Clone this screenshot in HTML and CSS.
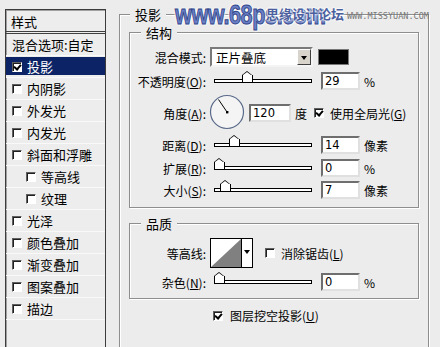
FILE: index.html
```html
<!DOCTYPE html>
<html lang="zh">
<head>
  <meta charset="UTF-8" />
  <title>图层样式 - 投影</title>
  <link rel="stylesheet" href="styles.css">
</head>
<body>
  <div class="dialog">
    <div class="styles-list">
      <div class="list-head">样式</div>
      <div class="item">混合选项:自定</div>
      <div class="item selected"><span class="cb checked"></span>投影</div>
      <div class="item"><span class="cb"></span>内阴影</div>
      <div class="item"><span class="cb"></span>外发光</div>
      <div class="item"><span class="cb"></span>内发光</div>
      <div class="item"><span class="cb"></span>斜面和浮雕</div>
      <div class="item sub"><span class="cb"></span>等高线</div>
      <div class="item sub"><span class="cb"></span>纹理</div>
      <div class="item"><span class="cb"></span>光泽</div>
      <div class="item"><span class="cb"></span>颜色叠加</div>
      <div class="item"><span class="cb"></span>渐变叠加</div>
      <div class="item"><span class="cb"></span>图案叠加</div>
      <div class="item"><span class="cb"></span>描边</div>
    </div>

    <div class="main">
      <div class="group outer">
        <span class="legend">投影</span>

        <div class="group inner struct">
          <span class="legend">结构</span>
          <div class="row r-mode">
            <label>混合模式:</label>
            <div class="select"><span>正片叠底</span><i class="drop"></i></div>
            <div class="swatch"></div>
          </div>
          <div class="row r-opacity">
            <label>不透明度(<u>O</u>):</label>
            <div class="slider"><i class="thumb" style="left: 28px"></i></div>
            <div class="num">29</div>
            <span class="unit">%</span>
          </div>
          <div class="row r-angle">
            <label>角度(<u>A</u>):</label>
            <div class="dial">
              <svg width="36" height="36" viewBox="0 0 36 36">
                <circle cx="18" cy="18" r="16.5" fill="#f4f4f4" stroke="#5a6a8a" stroke-width="1.2"/>
                <line x1="18" y1="18" x2="9.5" y2="5.5" stroke="#000" stroke-width="1"/>
                <rect x="17" y="17" width="2.4" height="2.4" fill="#000"/>
              </svg>
            </div>
            <div class="num deg">120</div>
            <span class="unit">度</span>
            <span class="cb checked"></span>
            <span class="opt">使用全局光(<u>G</u>)</span>
          </div>
          <div class="row r-dist">
            <label>距离(<u>D</u>):</label>
            <div class="slider"><i class="thumb" style="left: 15px"></i></div>
            <div class="num">14</div>
            <span class="unit">像素</span>
          </div>
          <div class="row r-spread">
            <label>扩展(<u>R</u>):</label>
            <div class="slider"><i class="thumb" style="left: 0px"></i></div>
            <div class="num">0</div>
            <span class="unit">%</span>
          </div>
          <div class="row r-size">
            <label>大小(<u>S</u>):</label>
            <div class="slider"><i class="thumb" style="left: 6px"></i></div>
            <div class="num">7</div>
            <span class="unit">像素</span>
          </div>
        </div>

        <div class="group inner quality">
          <span class="legend">品质</span>
          <div class="row r-contour">
            <label>等高线:</label>
            <div class="contour">
              <svg width="30" height="28" viewBox="0 0 30 28">
                <rect width="30" height="28" fill="#fff"/>
                <polygon points="0,28 30,0 30,28" fill="#808080"/>
              </svg>
              <i class="drop small"></i>
            </div>
            <span class="cb"></span>
            <span class="opt">消除锯齿(<u>L</u>)</span>
          </div>
          <div class="row r-noise">
            <label>杂色(<u>N</u>):</label>
            <div class="slider"><i class="thumb" style="left: 0px"></i></div>
            <div class="num">0</div>
            <span class="unit">%</span>
          </div>
        </div>

        <div class="knockout"><span class="cb checked"></span>图层挖空投影(<u>U</u>)</div>
      </div>
    </div>

    <div class="mark">www.68ps.com</div>
    <div class="mark-cn">思缘设计论坛</div>
    <div class="mark-en">WWW.MISSYUAN.COM</div>
  </div>
</body>
</html>
```

FILE: styles.css
```css
body, html {
  margin: 0; padding: 0;
  background: #ececec;
  font-family: "Noto Sans CJK SC", "DejaVu Sans", sans-serif;
  font-size: 12px;
  color: #000;
}
.dialog {
  position: relative;
  width: 440px;
  height: 347px;
  overflow: hidden;
  display: flex;
  align-items: flex-start;
}

/* left list */
.styles-list {
  margin: 9px 0 0 5px;
  width: 99px;
  height: 338px;
  border: 1px solid #3c3c3c;
  border-bottom: none;
  box-shadow: inset 1px 1px 0 #a0a0a0;
  background: #ededed;
}
.list-head {
  height: 21px;
  line-height: 23px;
  padding-left: 5px;
  border-bottom: 3px double #404040;
  font-size: 13px;
}
.item {
  height: 21px;
  line-height: 21px;
  border-bottom: 1px solid #f9f9f9;
  padding-left: 6px;
  display: flex;
  align-items: center;
  font-size: 13px;
  white-space: nowrap;
}
.item .cb { margin: 0 5px 0 0; }
.item.sub { padding-left: 20px; }
.item.selected {
  background: #0c2466;
  color: #fff;
  box-shadow: inset 0 1px 0 #ededed, inset 0 -2px 0 #ededed;
}

/* checkbox */
.cb {
  display: inline-block;
  width: 8px;
  height: 8px;
  background: #fff;
  border: 1px solid #fff;
  border-top-color: #606060;
  border-left-color: #606060;
  box-shadow: inset 1px 1px 0 #202020;
  position: relative;
  flex: none;
}
.cb.checked::after {
  content: "";
  position: absolute;
  left: 2px; top: 0px;
  width: 3px; height: 5px;
  border: solid #000;
  border-width: 0 2px 2px 0;
  transform: rotate(40deg);
}

/* right side */
.main {
  margin: 14px 0 0 13px;
  width: 310px;
}
.group {
  position: relative;
  border: 1px solid #8e8e8e;
  box-shadow: 1px 1px 0 #fff, inset 1px 1px 0 #fff;
}
.group.outer {
  height: 340px;
  border-bottom: none;
  padding: 17px 9px 0 9px;
}
.legend {
  position: absolute;
  top: -9px;
  left: 10px;
  background: #ececec;
  padding: 0 5px;
  line-height: 17px;
  font-size: 13px;
}
.group.inner .legend { left: 11px; }
.group.struct {
  height: 160px;
  padding-top: 14px;
}
.group.quality {
  margin-top: 15px;
  height: 60px;
  padding-top: 14px;
}

.row {
  display: flex;
  align-items: center;
  height: 18px;
  white-space: nowrap;
}
.row label {
  width: 76px;
  text-align: right;
  flex: none;
}
u { text-decoration: underline; text-underline-offset: 1px; }
.r-mode { height: 20px; }
.r-opacity { margin-top: 5px; }
.r-angle { margin-top: 6px; height: 34px; }
.r-dist { margin-top: 6px; }
.r-spread { margin-top: 5px; }
.r-size { margin-top: 4px; }
.r-contour { height: 30px; }
.r-noise { margin-top: 5px; }

.select {
  margin-left: 4px;
  width: 97px;
  height: 16px;
  background: #fff;
  border: 2px solid;
  border-color: #7a7a7a #f4f4f4 #f4f4f4 #7a7a7a;
  display: flex;
  align-items: center;
  justify-content: space-between;
  padding-left: 2px;
}
.select span { font-size: 12.5px; padding-left: 2px; }
.drop {
  background: #d8d4cc;
  border: 1px solid;
  border-color: #fff #404040 #404040 #fff;
  position: relative;
  box-sizing: border-box;
  height: 16px;
  width: 14px;
}
.drop::after {
  content: "";
  position: absolute;
  left: 3px; top: 6px;
  border: 3px solid transparent;
  border-top: 4px solid #000;
  border-bottom: none;
}
.swatch {
  margin-left: 5px;
  width: 29px;
  height: 14px;
  background: #000;
  border: 1px solid #777;
}

.slider {
  margin-left: 8px;
  width: 96px;
  height: 2px;
  border: 1px solid #000;
  background: #fff;
  position: relative;
  flex: none;
}
.thumb {
  position: absolute;
  top: -5px;
  width: 9px;
  height: 7px;
  margin-left: -1px;
  background: #fff;
  border: 1px solid #000;
  border-top: none;
  box-sizing: content-box;
}
.thumb::before {
  content: "";
  position: absolute;
  left: -1px; top: -4px;
  width: 0; height: 0;
  border-left: 5.5px solid transparent;
  border-right: 5.5px solid transparent;
  border-bottom: 4px solid #000;
}
.thumb::after {
  content: "";
  position: absolute;
  left: 0px; top: -3px;
  border-left: 4.5px solid transparent;
  border-right: 4.5px solid transparent;
  border-bottom: 3px solid #fff;
}

.num {
  margin-left: 9px;
  width: 33px;
  height: 14px;
  line-height: 15px;
  background: #fff;
  border: 2px solid;
  border-color: #6e6e6e #e0e0e0 #e0e0e0 #6e6e6e;
  padding-left: 2px;
  font-family: "DejaVu Sans", sans-serif;
  font-size: 11.5px;
}
.unit { margin-left: 4px; }
.dial { margin-left: 3px; width: 36px; height: 36px; margin-top: -2px; }
.num.deg { margin-left: 4px; width: 36px; }
.r-angle .cb { margin-left: 7px; }
.opt { margin-left: 6px; }

.contour {
  margin-left: 4px;
  display: flex;
  align-items: stretch;
  border: 1px solid #000;
  height: 28px;
  background: #fff;
}
.contour svg { display: block; }
.drop.small {
  width: 11px;
  height: 28px;
  background: #fff;
  border: none;
  border-left: 1px solid #000;
}
.drop.small::after { left: 2px; top: 11px; }
.r-contour .cb { margin-left: 12px; }

.knockout {
  margin: 8px 0 0 84px;
  display: flex;
  align-items: center;
  white-space: nowrap;
}
.knockout .cb { margin-right: 7px; }

/* watermark overlays */
.mark {
  position: absolute;
  left: 175px;
  top: 2px;
  line-height: 27px;
  font-family: "Liberation Sans", sans-serif;
  font-weight: bold;
  font-size: 27px;
  letter-spacing: -0.5px;
  transform: scaleX(0.8);
  transform-origin: left top;
  color: #6a80c6;
  -webkit-text-stroke: 1px #2f4386;
  text-shadow: 0 0 2px #fff, 0 0 3px #fff, 1px 1px 3px #fff, -1px -1px 2px #fff;
}
.mark-cn {
  position: absolute;
  left: 266px;
  top: 5px;
  line-height: 18px;
  font-size: 13px;
  font-weight: bold;
  color: #4b5f9e;
  text-shadow: 0 0 2px #fff, 0 0 2px #fff, 0 0 3px #fff;
}
.mark-en {
  position: absolute;
  left: 347px;
  top: 11px;
  line-height: 11px;
  font-family: "DejaVu Sans Mono", monospace;
  font-size: 8.5px;
  color: #777;
}
```
